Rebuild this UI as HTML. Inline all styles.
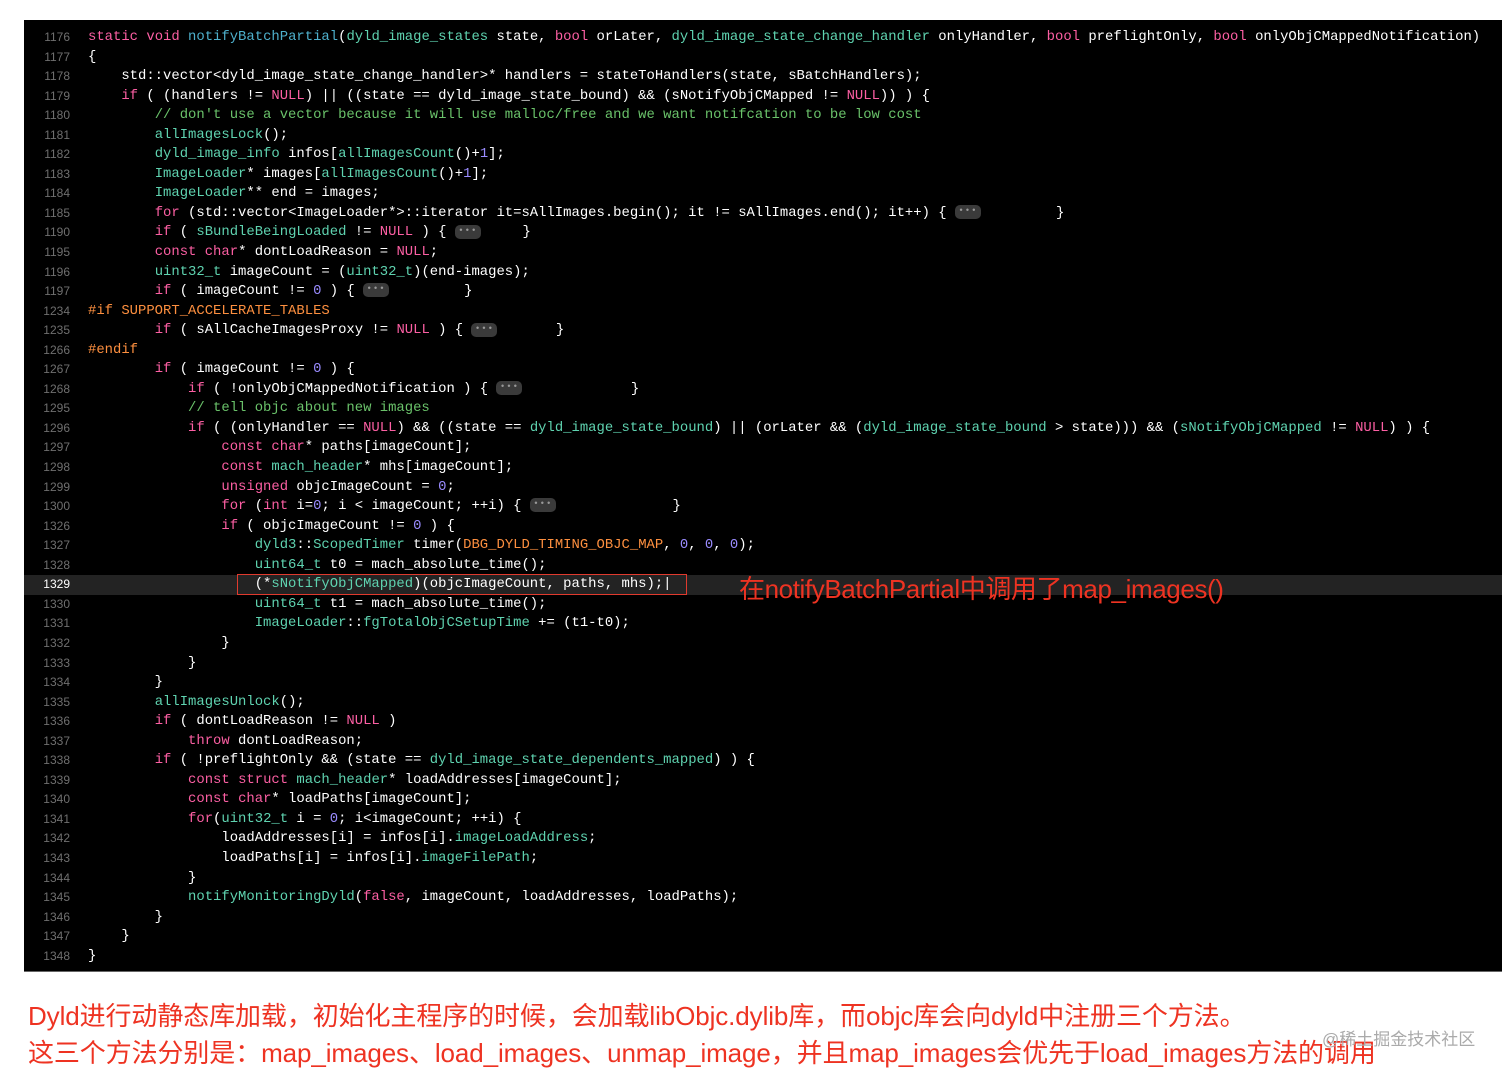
<!DOCTYPE html>
<html><head><meta charset="utf-8"><style>
*{margin:0;padding:0;box-sizing:border-box}
body{width:1512px;height:1076px;background:#fff;position:relative;overflow:hidden;font-family:"Liberation Sans","Noto Sans CJK SC",sans-serif}
#code{position:absolute;left:24px;top:20px;width:1478px;height:952px;background:#000;border-bottom:1px solid #666}
#lines{position:absolute;left:0;top:8px;width:1478px}
.l{height:19.55px;line-height:19.55px;white-space:pre;font-family:"Liberation Mono",monospace;font-size:13.9px;color:#fff;position:relative}
.l .n{position:absolute;left:0;width:46px;text-align:right;color:#6f6f6f;font-family:"Liberation Sans",sans-serif;font-size:12px}
.l .c{position:absolute;left:64px}
.hl{background:#232323}
.hl .n{color:#fff}
.k{color:#fc5fa3}.f{color:#4eb0cc}.t{color:#5fd3b0}.m{color:#6ac26a}.u{color:#9a8cff}.pp{color:#fd8f3f}
.b{display:inline-block;width:26px;height:14px;line-height:12px;border-radius:5px;background:#3a3a3a;color:#999;font-size:9px;text-align:center;vertical-align:middle;font-style:normal;letter-spacing:1px}
#box{position:absolute;left:237px;top:574px;width:450px;height:21px;border:1.5px solid #e03a2e}
#ann{position:absolute;left:739px;top:569px;font-size:26px;color:#ee3322;white-space:nowrap;letter-spacing:-0.4px}
.bt{position:absolute;left:28px;font-size:26px;color:#ee3322;white-space:nowrap;letter-spacing:-0.1px}
#wm{position:absolute;left:1322px;top:1025px;font-size:17px;color:#aaa;white-space:nowrap}
</style></head><body>
<div id="code"><div id="lines">
<div class="l"><span class="n">1176</span><span class="c"><span class="k">static</span> <span class="k">void</span> <span class="f">notifyBatchPartial</span>(<span class="t">dyld_image_states</span> state, <span class="k">bool</span> orLater, <span class="t">dyld_image_state_change_handler</span> onlyHandler, <span class="k">bool</span> preflightOnly, <span class="k">bool</span> onlyObjCMappedNotification)</span></div>
<div class="l"><span class="n">1177</span><span class="c">{</span></div>
<div class="l"><span class="n">1178</span><span class="c">    std::vector&lt;dyld_image_state_change_handler&gt;* handlers = stateToHandlers(state, sBatchHandlers);</span></div>
<div class="l"><span class="n">1179</span><span class="c">    <span class="k">if</span> ( (handlers != <span class="k">NULL</span>) || ((state == dyld_image_state_bound) &amp;&amp; (sNotifyObjCMapped != <span class="k">NULL</span>)) ) {</span></div>
<div class="l"><span class="n">1180</span><span class="c">        <span class="m">// don't use a vector because it will use malloc/free and we want notifcation to be low cost</span></span></div>
<div class="l"><span class="n">1181</span><span class="c">        <span class="t">allImagesLock</span>();</span></div>
<div class="l"><span class="n">1182</span><span class="c">        <span class="t">dyld_image_info</span> infos[<span class="t">allImagesCount</span>()+<span class="u">1</span>];</span></div>
<div class="l"><span class="n">1183</span><span class="c">        <span class="t">ImageLoader</span>* images[<span class="t">allImagesCount</span>()+<span class="u">1</span>];</span></div>
<div class="l"><span class="n">1184</span><span class="c">        <span class="t">ImageLoader</span>** end = images;</span></div>
<div class="l"><span class="n">1185</span><span class="c">        <span class="k">for</span> (std::vector&lt;ImageLoader*&gt;::iterator it=sAllImages.begin(); it != sAllImages.end(); it++) { <i class="b">•••</i>         }</span></div>
<div class="l"><span class="n">1190</span><span class="c">        <span class="k">if</span> ( <span class="t">sBundleBeingLoaded</span> != <span class="k">NULL</span> ) { <i class="b">•••</i>     }</span></div>
<div class="l"><span class="n">1195</span><span class="c">        <span class="k">const</span> <span class="k">char</span>* dontLoadReason = <span class="k">NULL</span>;</span></div>
<div class="l"><span class="n">1196</span><span class="c">        <span class="t">uint32_t</span> imageCount = (<span class="t">uint32_t</span>)(end-images);</span></div>
<div class="l"><span class="n">1197</span><span class="c">        <span class="k">if</span> ( imageCount != <span class="u">0</span> ) { <i class="b">•••</i>         }</span></div>
<div class="l"><span class="n">1234</span><span class="c"><span class="pp">#if SUPPORT_ACCELERATE_TABLES</span></span></div>
<div class="l"><span class="n">1235</span><span class="c">        <span class="k">if</span> ( sAllCacheImagesProxy != <span class="k">NULL</span> ) { <i class="b">•••</i>       }</span></div>
<div class="l"><span class="n">1266</span><span class="c"><span class="pp">#endif</span></span></div>
<div class="l"><span class="n">1267</span><span class="c">        <span class="k">if</span> ( imageCount != <span class="u">0</span> ) {</span></div>
<div class="l"><span class="n">1268</span><span class="c">            <span class="k">if</span> ( !onlyObjCMappedNotification ) { <i class="b">•••</i>             }</span></div>
<div class="l"><span class="n">1295</span><span class="c">            <span class="m">// tell objc about new images</span></span></div>
<div class="l"><span class="n">1296</span><span class="c">            <span class="k">if</span> ( (onlyHandler == <span class="k">NULL</span>) &amp;&amp; ((state == <span class="t">dyld_image_state_bound</span>) || (orLater &amp;&amp; (<span class="t">dyld_image_state_bound</span> &gt; state))) &amp;&amp; (<span class="t">sNotifyObjCMapped</span> != <span class="k">NULL</span>) ) {</span></div>
<div class="l"><span class="n">1297</span><span class="c">                <span class="k">const</span> <span class="k">char</span>* paths[imageCount];</span></div>
<div class="l"><span class="n">1298</span><span class="c">                <span class="k">const</span> <span class="t">mach_header</span>* mhs[imageCount];</span></div>
<div class="l"><span class="n">1299</span><span class="c">                <span class="k">unsigned</span> objcImageCount = <span class="u">0</span>;</span></div>
<div class="l"><span class="n">1300</span><span class="c">                <span class="k">for</span> (<span class="k">int</span> i=<span class="u">0</span>; i &lt; imageCount; ++i) { <i class="b">•••</i>              }</span></div>
<div class="l"><span class="n">1326</span><span class="c">                <span class="k">if</span> ( objcImageCount != <span class="u">0</span> ) {</span></div>
<div class="l"><span class="n">1327</span><span class="c">                    <span class="t">dyld3</span>::<span class="t">ScopedTimer</span> timer(<span class="pp">DBG_DYLD_TIMING_OBJC_MAP</span>, <span class="u">0</span>, <span class="u">0</span>, <span class="u">0</span>);</span></div>
<div class="l"><span class="n">1328</span><span class="c">                    <span class="t">uint64_t</span> t0 = mach_absolute_time();</span></div>
<div class="l hl"><span class="n">1329</span><span class="c">                    (*<span class="t">sNotifyObjCMapped</span>)(objcImageCount, paths, mhs);|</span></div>
<div class="l"><span class="n">1330</span><span class="c">                    <span class="t">uint64_t</span> t1 = mach_absolute_time();</span></div>
<div class="l"><span class="n">1331</span><span class="c">                    <span class="t">ImageLoader</span>::<span class="t">fgTotalObjCSetupTime</span> += (t1-t0);</span></div>
<div class="l"><span class="n">1332</span><span class="c">                }</span></div>
<div class="l"><span class="n">1333</span><span class="c">            }</span></div>
<div class="l"><span class="n">1334</span><span class="c">        }</span></div>
<div class="l"><span class="n">1335</span><span class="c">        <span class="t">allImagesUnlock</span>();</span></div>
<div class="l"><span class="n">1336</span><span class="c">        <span class="k">if</span> ( dontLoadReason != <span class="k">NULL</span> )</span></div>
<div class="l"><span class="n">1337</span><span class="c">            <span class="k">throw</span> dontLoadReason;</span></div>
<div class="l"><span class="n">1338</span><span class="c">        <span class="k">if</span> ( !preflightOnly &amp;&amp; (state == <span class="t">dyld_image_state_dependents_mapped</span>) ) {</span></div>
<div class="l"><span class="n">1339</span><span class="c">            <span class="k">const</span> <span class="k">struct</span> <span class="t">mach_header</span>* loadAddresses[imageCount];</span></div>
<div class="l"><span class="n">1340</span><span class="c">            <span class="k">const</span> <span class="k">char</span>* loadPaths[imageCount];</span></div>
<div class="l"><span class="n">1341</span><span class="c">            <span class="k">for</span>(<span class="t">uint32_t</span> i = <span class="u">0</span>; i&lt;imageCount; ++i) {</span></div>
<div class="l"><span class="n">1342</span><span class="c">                loadAddresses[i] = infos[i].<span class="t">imageLoadAddress</span>;</span></div>
<div class="l"><span class="n">1343</span><span class="c">                loadPaths[i] = infos[i].<span class="t">imageFilePath</span>;</span></div>
<div class="l"><span class="n">1344</span><span class="c">            }</span></div>
<div class="l"><span class="n">1345</span><span class="c">            <span class="t">notifyMonitoringDyld</span>(<span class="k">false</span>, imageCount, loadAddresses, loadPaths);</span></div>
<div class="l"><span class="n">1346</span><span class="c">        }</span></div>
<div class="l"><span class="n">1347</span><span class="c">    }</span></div>
<div class="l"><span class="n">1348</span><span class="c">}</span></div>
</div></div>
<div id="box"></div>
<div id="ann">在notifyBatchPartial中调用了map_images()</div>
<div class="bt" style="top:996px">Dyld进行动静态库加载，初始化主程序的时候，会加载libObjc.dylib库，而objc库会向dyld中注册三个方法。</div>
<div class="bt" style="top:1033px">这三个方法分别是：map_images、load_images、unmap_image，并且map_images会优先于load_images方法的调用</div>
<div id="wm">@稀土掘金技术社区</div>
</body></html>
